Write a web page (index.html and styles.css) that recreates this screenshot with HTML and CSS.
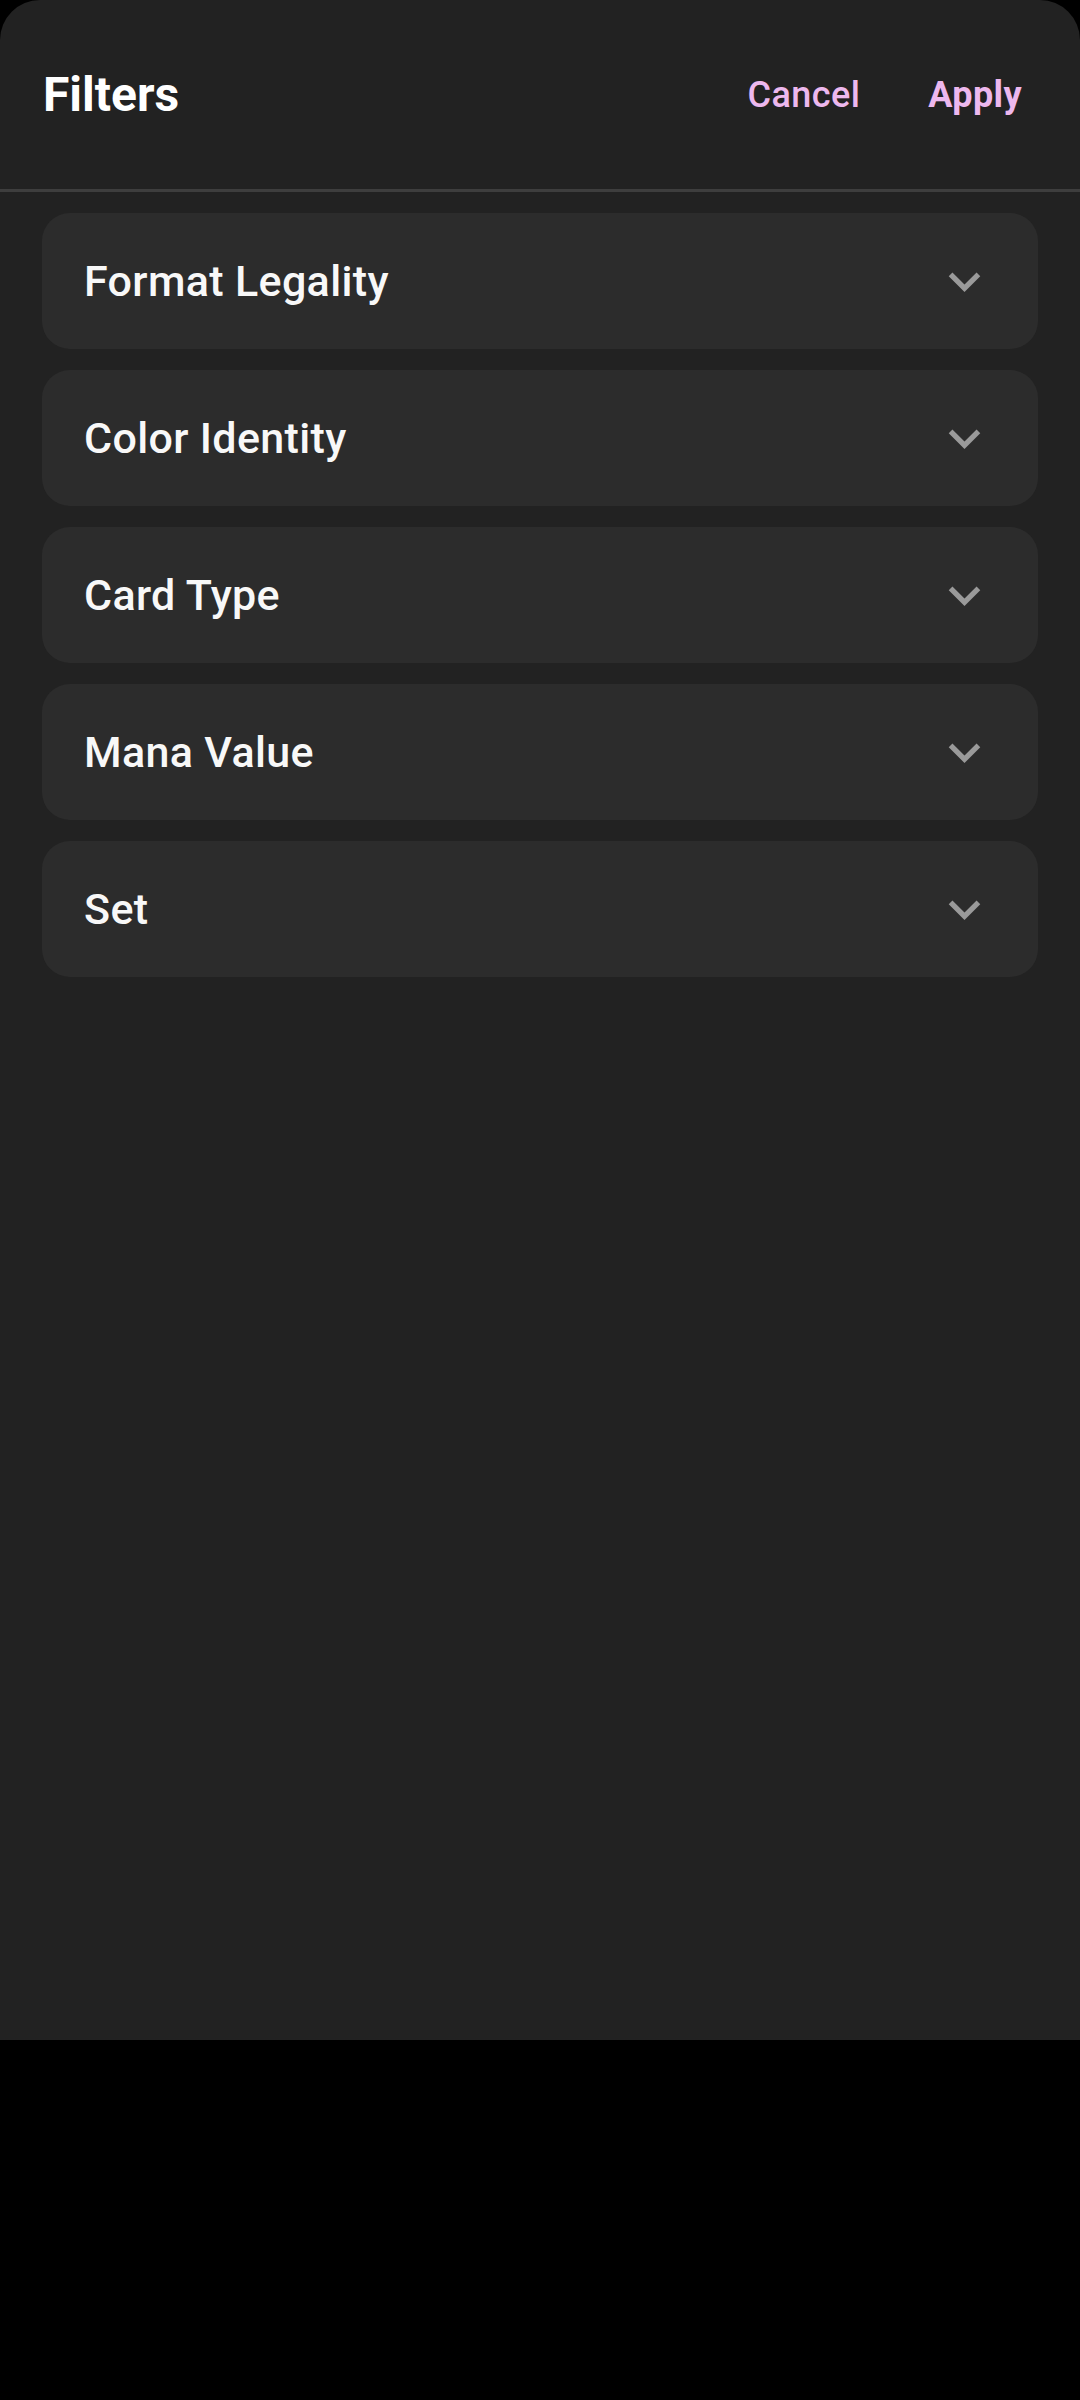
FILE: index.html
```html
<!DOCTYPE html>
<html lang="en">
<head>
<meta charset="utf-8">
<title>Filters</title>
<link rel="stylesheet" href="styles.css">
</head>
<body>
<div class="sheet">
  <header class="header">
    <h1 class="title">Filters</h1>
    <div class="actions">
      <button class="btn btn-cancel">Cancel</button>
      <button class="btn btn-apply">Apply</button>
    </div>
  </header>
  <div class="divider"></div>
  <div class="list">
    <div class="card"><span class="card-title">Format Legality</span><svg class="chev" viewBox="0 0 24 24"><path d="M16.59 8.59L12 13.17 7.41 8.59 6 10l6 6 6-6z"/></svg></div>
    <div class="card"><span class="card-title">Color Identity</span><svg class="chev" viewBox="0 0 24 24"><path d="M16.59 8.59L12 13.17 7.41 8.59 6 10l6 6 6-6z"/></svg></div>
    <div class="card"><span class="card-title">Card Type</span><svg class="chev" viewBox="0 0 24 24"><path d="M16.59 8.59L12 13.17 7.41 8.59 6 10l6 6 6-6z"/></svg></div>
    <div class="card"><span class="card-title">Mana Value</span><svg class="chev" viewBox="0 0 24 24"><path d="M16.59 8.59L12 13.17 7.41 8.59 6 10l6 6 6-6z"/></svg></div>
    <div class="card"><span class="card-title">Set</span><svg class="chev" viewBox="0 0 24 24"><path d="M16.59 8.59L12 13.17 7.41 8.59 6 10l6 6 6-6z"/></svg></div>
  </div>
</div>
</body>
</html>
```

FILE: styles.css
```css
html, body {
  margin: 0;
  padding: 0;
  background: #000;
}
body {
  width: 1080px;
  height: 2400px;
  font-family: Roboto, "Noto Sans", sans-serif;
}
.sheet {
  background: #222222;
  height: 2040px;
  border-radius: 40px 40px 0 0;
  overflow: hidden;
}
.header {
  height: 189px;
  display: flex;
  align-items: center;
  justify-content: space-between;
  padding: 0 27px 0 43px;
  box-sizing: border-box;
}
.title {
  margin: 0;
  font-size: 48px;
  font-weight: 700;
  color: #ffffff;
  line-height: 1;
}
.actions {
  display: flex;
  align-items: center;
  gap: 6px;
}
.btn {
  background: none;
  border: none;
  font-family: Roboto, "Noto Sans", sans-serif;
  font-size: 36px;
  letter-spacing: 0.4px;
  color: #edb8ee;
  padding: 0 31px;
  height: 80px;
  line-height: 1;
}
.btn-cancel {
  font-weight: 500;
}
.btn-apply {
  font-weight: 700;
}
.divider {
  height: 3px;
  background: #3e3e3e;
}
.list {
  display: flex;
  flex-direction: column;
  gap: 21px;
  padding: 21px 42px 0 42px;
}
.card {
  height: 136px;
  background: #2c2c2c;
  border-radius: 28px;
  display: flex;
  align-items: center;
  justify-content: space-between;
  padding: 0 42px 0 42px;
  box-sizing: border-box;
}
.card-title {
  font-size: 43px;
  font-weight: 500;
  letter-spacing: 0.35px;
  color: #f8f8f8;
}
.chev {
  width: 63px;
  height: 63px;
  fill: #9a9a9a;
}
```
